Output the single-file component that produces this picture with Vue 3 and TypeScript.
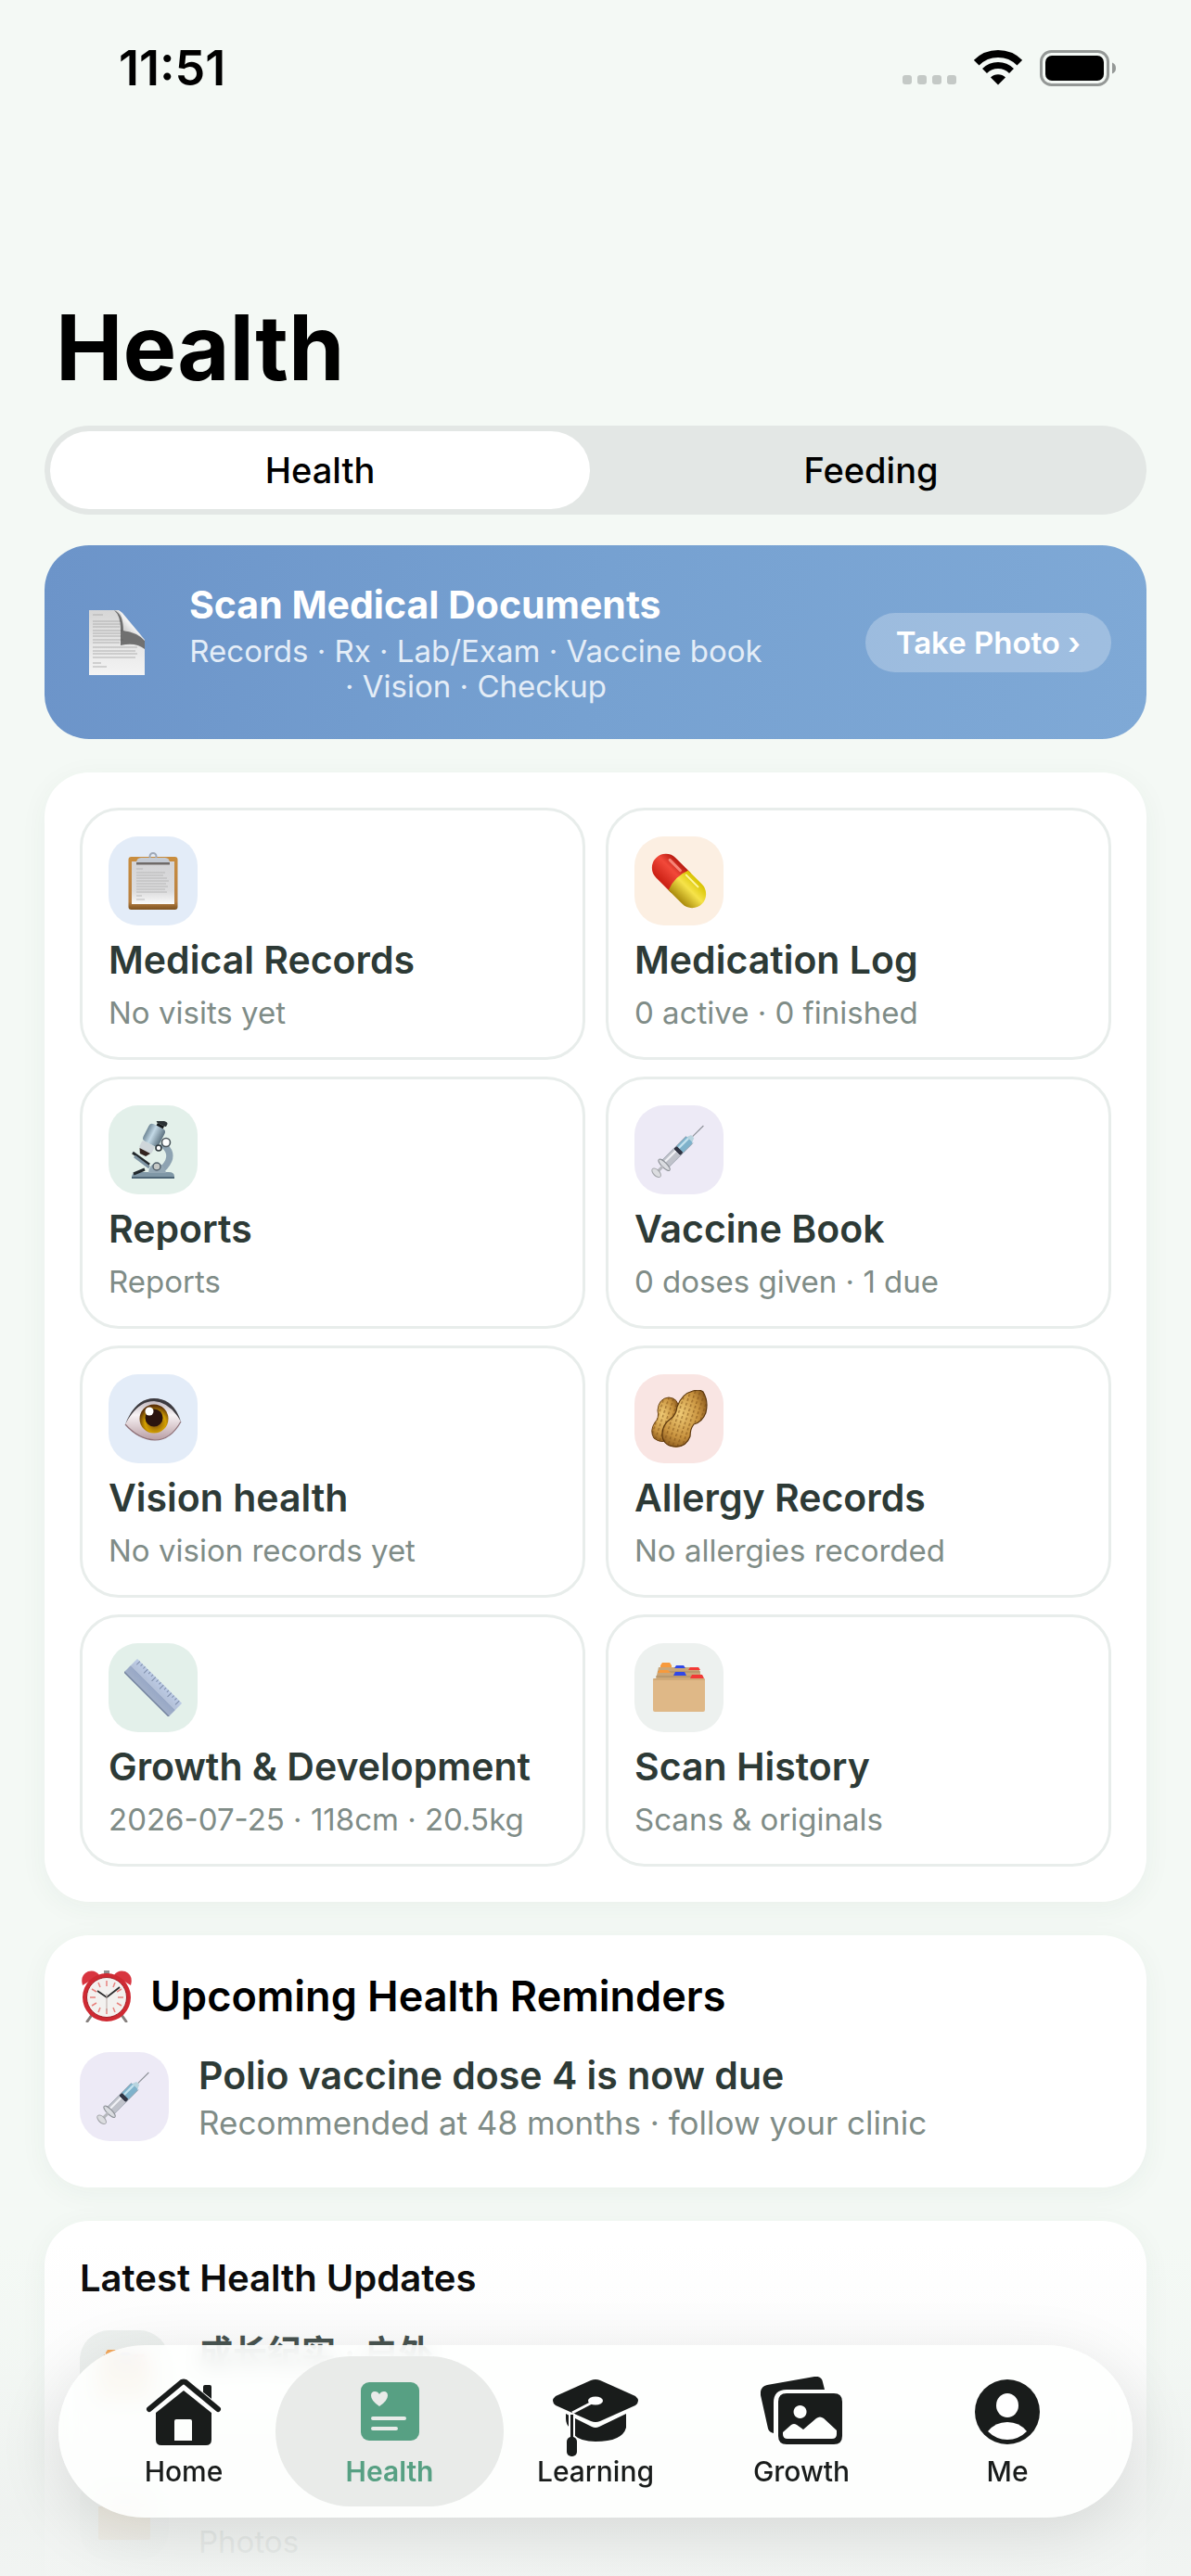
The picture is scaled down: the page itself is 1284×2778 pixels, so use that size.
<script setup lang="ts">
import { ref } from 'vue'

interface Tile {
  icon: string
  tint: string
  title: string
  sub: string
}

const segments = ['Health', 'Feeding']
const activeSegment = ref('Health')

const tiles: Tile[] = [
  { icon: 'clipboard', tint: 'blue', title: 'Medical Records', sub: 'No visits yet' },
  { icon: 'pill', tint: 'orange', title: 'Medication Log', sub: '0 active · 0 finished' },
  { icon: 'microscope', tint: 'green', title: 'Reports', sub: 'Reports' },
  { icon: 'syringe', tint: 'purple', title: 'Vaccine Book', sub: '0 doses given · 1 due' },
  { icon: 'eye', tint: 'blue', title: 'Vision health', sub: 'No vision records yet' },
  { icon: 'peanuts', tint: 'red', title: 'Allergy Records', sub: 'No allergies recorded' },
  { icon: 'ruler', tint: 'green', title: 'Growth & Development', sub: '2026-07-25 · 118cm · 20.5kg' },
  { icon: 'dividers', tint: 'gray', title: 'Scan History', sub: 'Scans & originals' },
]

const updates = [
  { title: '成长纪实 · 户外', sub: '' },
  { title: '', sub: 'Photos' },
]

const tabs = ['Home', 'Health', 'Learning', 'Growth', 'Me']
const activeTab = ref('Health')
</script>

<template>
  <!-- Shared artwork -->
  <svg class="defs" aria-hidden="true">
    <defs>
      <linearGradient id="g-paper" x1="0" y1="0" x2="0" y2="1">
        <stop offset="0" stop-color="#d6d6d6" /><stop offset="1" stop-color="#f4f4f4" />
      </linearGradient>
      <linearGradient id="g-curl" x1="0" y1="1" x2="1" y2="0">
        <stop offset="0" stop-color="#9a9a9a" /><stop offset="0.5" stop-color="#f2f2f2" /><stop offset="1" stop-color="#d8d8d8" />
      </linearGradient>
      <linearGradient id="g-wood" x1="0" y1="0" x2="0" y2="1">
        <stop offset="0" stop-color="#c98d3e" /><stop offset="0.85" stop-color="#b98143" /><stop offset="1" stop-color="#7c5220" />
      </linearGradient>
      <linearGradient id="g-sheet" x1="0" y1="0" x2="0" y2="1">
        <stop offset="0" stop-color="#d4d4d6" /><stop offset="0.7" stop-color="#dcdcdd" /><stop offset="1" stop-color="#fafafa" />
      </linearGradient>
      <linearGradient id="g-red" x1="0" y1="0" x2="0" y2="1">
        <stop offset="0" stop-color="#b81a10" /><stop offset="0.4" stop-color="#f2493a" /><stop offset="1" stop-color="#c91e12" />
      </linearGradient>
      <linearGradient id="g-yellow" x1="0" y1="0" x2="0" y2="1">
        <stop offset="0" stop-color="#d8c300" /><stop offset="0.45" stop-color="#f6e34a" /><stop offset="1" stop-color="#a98a0c" />
      </linearGradient>
      <linearGradient id="g-steel" x1="0" y1="0" x2="1" y2="0">
        <stop offset="0" stop-color="#6f8796" /><stop offset="0.4" stop-color="#c3d9e6" /><stop offset="1" stop-color="#5d7280" />
      </linearGradient>
      <linearGradient id="g-ruler" x1="0" y1="0" x2="0" y2="1">
        <stop offset="0" stop-color="#bccbe6" /><stop offset="0.5" stop-color="#b4c1d8" /><stop offset="0.52" stop-color="#98a8c6" /><stop offset="1" stop-color="#a2b0c9" />
      </linearGradient>
      <radialGradient id="g-iris" cx="0.55" cy="0.65" r="0.6">
        <stop offset="0" stop-color="#7a4a10" /><stop offset="0.6" stop-color="#d3a000" /><stop offset="1" stop-color="#5d3208" />
      </radialGradient>
      <linearGradient id="g-white" x1="0" y1="0" x2="0" y2="1">
        <stop offset="0" stop-color="#b9aeb6" /><stop offset="0.4" stop-color="#f8f3f5" /><stop offset="1" stop-color="#b89da3" />
      </linearGradient>
      <radialGradient id="g-nut" cx="0.4" cy="0.4" r="0.7">
        <stop offset="0" stop-color="#f0cb76" /><stop offset="0.6" stop-color="#c99440" /><stop offset="1" stop-color="#7a4a14" />
      </radialGradient>
      <pattern id="p-nut" width="5" height="5" patternUnits="userSpaceOnUse" patternTransform="rotate(18)">
        <rect x="1" y="1" width="1.400" height="3" fill="#7a4b14" opacity="0.6" />
      </pattern>
    </defs>

    <symbol id="i-document" viewBox="0 0 60 70">
      <path d="M0 0H32L60 32V70H0Z" fill="url(#g-paper)" />
      <path d="M4 5h11M4 12h30M4 15h30M4 18h29M4 22h32M4 25h30M4 28h31M4 32h33M4 35h29M4 40h48M4 44h46M4 47h48M4 51h46M4 57h9M4 61h15" stroke="#b0b0b0" stroke-width="1.200" fill="none" />
      <path d="M27 0Q37 4 37 22Q52 24 60 33V42Q50 34 34 38V20Q34 6 27 0Z" fill="#4a4a4a" opacity="0.75" />
      <path d="M30 0Q38 4 37 22Q52 22 60 32L36 3Q33 0 30 0Z" fill="url(#g-curl)" />
    </symbol>

    <symbol id="i-clipboard" viewBox="0 0 62 62">
      <rect x="4.500" y="5" width="53" height="57" rx="3" fill="url(#g-wood)" />
      <rect x="8" y="10" width="46" height="46" fill="url(#g-sheet)" />
      <path d="M13 18h7M13 22h31M13 25h29M13 28h33M13 31h35M13 34h32M13 37h34M13 40h31M13 43h33M13 47h6M13 51h9" stroke="#b8b8b8" stroke-width="1" fill="none" />
      <circle cx="31" cy="4.500" r="3.500" fill="none" stroke="#9fa9b8" stroke-width="2" />
      <path d="M13 12Q13 6 18 6H44Q49 6 49 12Z" fill="#c4cad3" />
      <rect x="13" y="11" width="36" height="2.500" fill="#6f6a68" />
    </symbol>

    <symbol id="i-pill" viewBox="0 0 62 62">
      <g transform="rotate(45 31 31)">
        <path d="M34 16H11a15 15 0 0 0 0 30H34Z" fill="url(#g-red)" />
        <path d="M30 16H51a15 15 0 0 1 0 30H30Q24 31 30 16Z" fill="url(#g-yellow)" />
        <path d="M8 22H24" stroke="#ff9a8c" stroke-width="3" stroke-linecap="round" opacity="0.8" />
        <path d="M32 21H50" stroke="#fff6a0" stroke-width="2" stroke-linecap="round" />
      </g>
    </symbol>

    <symbol id="i-microscope" viewBox="0 0 62 62">
      <path d="M40 24Q54 34 46 46Q42 53 34 53" fill="none" stroke="#8ea3b2" stroke-width="7" />
      <path d="M8 60Q9 55 14 55H48Q54 55 54 60Z" fill="#7f97a6" />
      <path d="M8 60H54V62H8Z" fill="#4d6576" />
      <path d="M26 56Q27 46 35 45Q43 46 45 56Z" fill="#94a8b5" />
      <circle cx="35" cy="49" r="4" fill="#c6c9c6" stroke="#52606b" stroke-width="1.500" />
      <path d="M9 34L27 47" stroke="#22282c" stroke-width="3" />
      <path d="M11 38L27 50" stroke="#7d93a2" stroke-width="3" />
      <path d="M10 57L22 52" stroke="#22282c" stroke-width="3" />
      <g transform="rotate(27 30 18)">
        <rect x="26" y="-4" width="12" height="5" rx="2" fill="#2a3134" />
        <rect x="28" y="1" width="8" height="4" fill="#15191b" />
        <rect x="21" y="4" width="19" height="21" rx="4" fill="url(#g-steel)" />
        <rect x="22" y="25" width="15" height="9" rx="2" fill="#cfd6da" />
        <path d="M23 34H36L33 39H26Z" fill="#33231f" />
      </g>
      <circle cx="45" cy="23" r="4.500" fill="#fff" stroke="#4b565c" stroke-width="1.600" />
      <circle cx="37" cy="29" r="3" fill="#fff" stroke="#2e373c" stroke-width="1.600" />
    </symbol>

    <symbol id="i-syringe" viewBox="0 0 62 62">
      <g transform="rotate(45 31 31) translate(8 5) scale(0.750 0.920)">
        <path d="M31 -12V6" stroke="#8c9097" stroke-width="1.500" />
        <path d="M28 6h6l3 6H25Z" fill="#b9d4df" />
        <rect x="24" y="11" width="14" height="17" rx="2" fill="#7fb2cb" />
        <rect x="27" y="11" width="3" height="17" fill="#c4e2ee" />
        <rect x="24" y="27" width="14" height="5" rx="2" fill="#303443" />
        <rect x="24" y="32" width="14" height="20" fill="#bfc2ca" />
        <rect x="27" y="32" width="3" height="20" fill="#f0f1f5" />
        <path d="M24 11V52M38 11V52" stroke="#9aa3ad" stroke-width="1" />
        <ellipse cx="31" cy="53" rx="11" ry="3" fill="#dadce0" stroke="#8d9197" stroke-width="1.200" />
        <rect x="29" y="55" width="4" height="9" fill="#b6b8bd" />
        <ellipse cx="31" cy="66" rx="8" ry="3.500" fill="#dcdde0" stroke="#a3a5aa" stroke-width="1.200" />
      </g>
    </symbol>

    <symbol id="i-eye" viewBox="0 0 62 62">
      <path d="M1 37Q12 10 32 9Q52 10 61 34Q50 54 33 54Q15 53 1 37Z" fill="url(#g-white)" />
      <path d="M1 37Q12 9 32 9Q53 9 61 34Q49 13 32 12Q14 12 1 37Z" fill="#3d3b40" />
      <circle cx="32" cy="31" r="15.500" fill="url(#g-iris)" />
      <circle cx="32" cy="30" r="9.500" fill="#2b140f" />
      <circle cx="27" cy="23" r="4.500" fill="#fff" />
      <path d="M1 37Q15 53 33 54Q50 54 61 34" fill="none" stroke="#8f7279" stroke-width="1.200" />
    </symbol>

    <symbol id="i-peanuts" viewBox="0 0 62 62">
      <path d="M20 8Q31 9 30 20Q28 27 24 34Q24 42 18 54Q12 58 4 52Q-1 44 5 35Q10 30 8 22Q9 9 20 8Z" fill="url(#g-nut)" />
      <path d="M20 8Q31 9 30 20Q28 27 24 34Q24 42 18 54Q12 58 4 52Q-1 44 5 35Q10 30 8 22Q9 9 20 8Z" fill="url(#p-nut)" stroke="#6b4212" stroke-width="1" />
      <path d="M46 1Q54 -1 57 2Q63 12 60 24Q57 34 47 37Q43 42 43 50Q39 61 28 62Q15 61 13 50Q12 38 22 31Q28 27 29 18Q34 4 46 1Z" fill="url(#g-nut)" />
      <path d="M46 1Q54 -1 57 2Q63 12 60 24Q57 34 47 37Q43 42 43 50Q39 61 28 61Q15 61 13 50Q12 38 22 31Q28 27 29 18Q34 4 46 1Z" fill="url(#p-nut)" stroke="#5c370d" stroke-width="1.200" />
    </symbol>

    <symbol id="i-ruler" viewBox="0 0 62 62">
      <g transform="rotate(45 31 31)">
        <rect x="-3" y="21" width="68" height="20" fill="url(#g-ruler)" />
        <path d="M1 21v5M5 21v3M9 21v3M13 21v6M17 21v3M21 21v3M25 21v6M29 21v3M33 21v3M37 21v6M41 21v3M45 21v3M49 21v6M53 21v3M57 21v3M61 21v6" stroke="#7f8ea9" stroke-width="1" />
        <path d="M-3 41H65" stroke="#75849f" stroke-width="1.500" />
      </g>
    </symbol>

    <symbol id="i-dividers" viewBox="0 0 62 62">
      <path d="M9 9H52L56 22H6Z" fill="#c9a678" />
      <path d="M11 7l2-3h8l2 3v2H11Z" fill="#f79a3c" />
      <path d="M26 10l2-3h8l2 3Z" fill="#3048e8" />
      <path d="M41 12l2-3h9l2 3Z" fill="#f23a36" />
      <path d="M8 14H54M6 19H57" stroke="#a98a60" stroke-width="1.200" />
      <path d="M8 15l2-3h9l3 3Z" fill="#f79a3c" />
      <path d="M25 18l2-4h10l2 4Z" fill="#3048e8" />
      <path d="M43 21l2-4h11l2 4Z" fill="#f23a36" />
      <rect x="3" y="21" width="56" height="36" rx="2" fill="#dfb887" />
      <path d="M3 22H59" stroke="#c49c68" stroke-width="1.200" />
    </symbol>

    <symbol id="i-alarm" viewBox="0 0 56 56">
      <path d="M12 48L7 55M44 48L49 55" stroke="#85807e" stroke-width="3" stroke-linecap="round" />
      <rect x="25" y="0" width="6" height="5" fill="#8f8f8f" />
      <path d="M2 16Q-1 5 8 1Q16 -1 20 5Z" fill="#d83540" />
      <path d="M54 16Q57 5 48 1Q40 -1 36 5Z" fill="#d83540" />
      <circle cx="28" cy="29" r="26" fill="#cf2a33" />
      <circle cx="28" cy="29" r="21.500" fill="#f3f1ef" stroke="#a51f27" stroke-width="1" />
      <path d="M28 11v6M28 41v6M10 29h6M40 29h6M19 13l2 5M37 13l-2 5M19 45l2-5M37 45l-2-5M12 20l5 3M44 20l-5 3M12 38l5-3M44 38l-5-3" stroke="#e8837f" stroke-width="1.500" />
      <path d="M18 22L28 29L42 18" fill="none" stroke="#2c2c2c" stroke-width="1.800" />
      <path d="M28 25V44" stroke="#b9aaa7" stroke-width="1" />
    </symbol>

    <symbol id="t-home" viewBox="0 0 82 72">
      <path d="M62 26V9q0-2 2-2h5q2 0 2 2V31Z" />
      <path d="M3 34L41 4L79 34" fill="none" stroke="#fff" stroke-width="9" />
      <path d="M4 33L39 4Q41 3 43 4L78 33" fill="none" stroke="currentColor" stroke-width="6" stroke-linecap="round" />
      <path d="M41 13L71 37V66q0 6-6 6H17q-6 0-6-6V37ZM33 44q-2 0-2 2V67H50V46q0-2-2-2Z" fill-rule="evenodd" />
    </symbol>
    <symbol id="t-health" viewBox="0 0 63 63">
      <rect width="63" height="63" rx="9" />
      <path d="M20 26Q11 20 11 14.500Q11 10 15 10Q18.500 10 20 13Q21.500 10 25 10Q29 10 29 14.500Q29 20 20 26Z" fill="#e9ebe9" />
      <path d="M13 39H47M13 50H38" stroke="#e9ebe9" stroke-width="4" stroke-linecap="round" />
    </symbol>
    <symbol id="t-learning" viewBox="0 0 92 83">
      <path d="M14 37L42 51Q46 53 50 51L79 37V52Q75 67 46 67Q30 67 23 60V41L18 39V52Q14 48 14 42Z" />
      <path d="M41 1Q46 -1 51 1L89 18Q95 23 89 28L51 45Q46 47 41 45L3 28Q-3 23 3 18Z" />
      <ellipse cx="46" cy="23" rx="8" ry="4.500" fill="#fff" />
      <path d="M44 24L21 36" stroke="#fff" stroke-width="3" />
      <path d="M20.500 37V66" stroke="#fff" stroke-width="7" />
      <path d="M20.500 38V66" stroke="currentColor" stroke-width="3" />
      <rect x="15" y="62" width="11" height="21" rx="5" />
    </symbol>
    <symbol id="t-growth" viewBox="0 0 88 73">
      <path d="M7 9L58 0q8-1 9 6l2 8H28q-14 0-14 14V61q-5-1-6-5L0 20q-1-9 7-11Z" />
      <path d="M28 18H79q9 0 9 9V64q0 9-9 9H28q-9 0-9-9V27q0-9 9-9ZM42.500 31a7 7 0 1 0 .1 0ZM24 60V62q0 5 5 5H77q5 0 5-5V58L68 45Q64 42 60 45L46 57L39 52Q36 50 33 52Z" fill-rule="evenodd" />
    </symbol>
    <symbol id="t-me" viewBox="0 0 70 70">
      <circle cx="35" cy="35" r="35" />
      <ellipse cx="35" cy="28" rx="12" ry="13" fill="#fff" />
      <path d="M14 56Q22 46 35 46T56 56Q47 65 35 65T14 56Z" fill="#fff" />
    </symbol>
  </svg>

  <div class="screen">
    <header class="status">
      <time class="clock">11:51</time>
      <div class="indicators">
        <span class="dots"><i v-for="n in 4" :key="n"></i></span>
        <svg class="wifi" viewBox="0 0 52 38" aria-label="Wi-Fi">
          <path d="M2.700 13.700A33 33 0 0 1 49.300 13.700" fill="none" stroke="#000" stroke-width="8" />
          <path d="M11.500 22.500A20.500 20.500 0 0 1 40.500 22.500" fill="none" stroke="#000" stroke-width="7" />
          <path d="M26 37.500L18 29.500A11.500 11.500 0 0 1 34 29.500Z" />
        </svg>
        <svg class="battery" viewBox="0 0 83 39" aria-label="Battery">
          <rect x="1.500" y="1.500" width="72" height="36" rx="11" fill="none" stroke="#949896" stroke-width="3" />
          <rect x="6" y="6" width="63" height="27" rx="7" />
          <path d="M78 13.500Q82 15 82 19.500T78 25.500Z" fill="#949896" />
        </svg>
      </div>
    </header>

    <main class="content">
      <h1>Health</h1>

      <div class="segmented" role="tablist">
        <button
          v-for="s in segments"
          :key="s"
          type="button"
          role="tab"
          :aria-selected="activeSegment === s"
          :class="{ on: activeSegment === s }"
          @click="activeSegment = s"
        >{{ s }}</button>
      </div>

      <section class="banner">
        <svg class="doc"><use href="#i-document" /></svg>
        <div class="banner-text">
          <h2>Scan Medical Documents</h2>
          <p>Records · Rx · Lab/Exam · Vaccine book<br />· Vision · Checkup</p>
        </div>
        <button type="button" class="photo">Take Photo ›</button>
      </section>

      <section class="card grid">
        <button v-for="t in tiles" :key="t.title" type="button" class="tile">
          <span class="badge" :class="t.tint"><svg><use :href="'#i-' + t.icon" /></svg></span>
          <span class="title">{{ t.title }}</span>
          <span class="sub">{{ t.sub }}</span>
        </button>
      </section>

      <section class="card">
        <h2 class="heading"><svg><use href="#i-alarm" /></svg>Upcoming Health Reminders</h2>
        <div class="row">
          <span class="badge purple"><svg><use href="#i-syringe" /></svg></span>
          <div class="row-text">
            <span class="title">Polio vaccine dose 4 is now due</span>
            <span class="sub">Recommended at 48 months · follow your clinic</span>
          </div>
        </div>
      </section>

      <section class="card">
        <h2 class="heading small">Latest Health Updates</h2>
        <div v-for="(u, i) in updates" :key="i" class="row update">
          <span class="badge gray"><svg><use href="#i-dividers" /></svg></span>
          <div class="row-text">
            <span class="title">{{ u.title }}</span>
            <span class="sub">{{ u.sub }}</span>
          </div>
        </div>
      </section>
    </main>

    <div class="fade"></div>

    <nav class="tabbar">
      <a
        v-for="t in tabs"
        :key="t"
        href="#"
        :class="{ on: activeTab === t }"
        @click.prevent="activeTab = t"
      >
        <svg :class="t.toLowerCase()"><use :href="'#t-' + t.toLowerCase()" /></svg>
        <span>{{ t }}</span>
      </a>
    </nav>
  </div>
</template>

<style>
body {
  background: #f4f9f5;
}
</style>

<style scoped>
.defs {
  position: absolute;
  width: 0;
  height: 0;
}
.screen {
  position: relative;
  height: 100vh;
  overflow: hidden;
  background: #f4f9f5;
  font-family: Inter, "Noto Sans CJK SC", sans-serif;
  color: #000;
}
h1, h2, p {
  margin: 0;
}
button {
  font: inherit;
  color: inherit;
  border: 0;
  background: none;
  padding: 0;
}
svg {
  display: block;
  flex: none;
}

.status {
  display: flex;
  justify-content: space-between;
  align-items: center;
  height: 146px;
  padding: 0 80px 0 128px;
}
.clock {
  font-size: 52px;
  font-weight: 600;
}
.indicators {
  display: flex;
  align-items: center;
  gap: 19px;
}
.dots {
  display: flex;
  align-self: flex-end;
  gap: 6px;
  padding-bottom: 2px;
}
.dots i {
  width: 10px;
  height: 10px;
  border-radius: 3px;
  background: #c4c9c6;
}
.wifi {
  width: 52px;
  height: 38px;
}
.battery {
  width: 83px;
  height: 39px;
}

.content {
  display: flex;
  flex-direction: column;
  padding: 0 48px;
}
h1 {
  margin: 169px 0 24px;
  padding: 0 12px;
  font-size: 97px;
  line-height: 120px;
  font-weight: 700;
}

.segmented {
  display: flex;
  gap: 12px;
  padding: 6px;
  border-radius: 48px;
  background: #e3e7e5;
}
.segmented button {
  flex: 1;
  height: 84px;
  border-radius: 42px;
  font-size: 38px;
  font-weight: 500;
}
.segmented .on {
  background: #fff;
}

.banner {
  display: flex;
  align-items: center;
  margin-top: 33px;
  padding: 38px;
  border-radius: 48px;
  background: linear-gradient(100deg, #6c94c9, #76a1d1 50%, #7fa9d6);
  color: #fff;
}
.doc {
  width: 60px;
  height: 70px;
  margin: 0 48px 0 10px;
}
.banner-text {
  flex: 1;
}
.banner-text h2 {
  margin-bottom: 5px;
  font-size: 41px;
  line-height: 52px;
  font-weight: 700;
}
.banner-text p {
  width: 618px;
  font-size: 33px;
  line-height: 38px;
  text-align: center;
  white-space: nowrap;
  color: #e4edf7;
}
.photo {
  height: 64px;
  padding: 0 33px;
  border-radius: 32px;
  background: rgba(255, 255, 255, 0.26);
  font-size: 33px;
  font-weight: 600;
}

.card {
  margin-top: 36px;
  padding: 38px;
  border-radius: 48px;
  background: #fff;
  box-shadow: 0 6px 30px rgba(40, 80, 60, 0.05);
}
.grid {
  display: grid;
  grid-template-columns: 1fr 1fr;
  gap: 18px 22px;
}
.tile {
  display: flex;
  flex-direction: column;
  align-items: flex-start;
  padding: 28px;
  border: 3px solid #e8edeb;
  border-radius: 42px;
  text-align: left;
}
.badge {
  display: flex;
  align-items: center;
  justify-content: center;
  flex: none;
  width: 96px;
  height: 96px;
  border-radius: 32px;
}
.badge svg {
  width: 62px;
  height: 62px;
}
.blue { background: #e3ecf8; }
.orange { background: #fcefe2; }
.green { background: #e3f0ea; }
.purple { background: #edeaf6; }
.red { background: #f9e5e3; }
.gray { background: #edf1ef; }
.title {
  min-height: 50px;
  font-size: 41px;
  line-height: 50px;
  font-weight: 600;
  color: #2d3a36;
}
.sub {
  min-height: 40px;
  font-size: 33px;
  line-height: 40px;
  color: #7f8c87;
}
.tile .title {
  margin-top: 12px;
}
.tile .sub {
  margin-top: 12px;
}

.heading {
  display: flex;
  align-items: center;
  gap: 18px;
  font-size: 45px;
  line-height: 56px;
  font-weight: 600;
}
.heading svg {
  width: 58px;
  height: 56px;
}
.heading.small {
  font-size: 40px;
  line-height: 48px;
}
.row {
  display: flex;
  align-items: center;
  gap: 32px;
  margin-top: 20px;
  padding: 12px 0;
}
.update + .update {
  margin-top: 32px;
}
.row-text {
  display: flex;
  flex-direction: column;
  gap: 6px;
}
.row-text .sub {
  font-size: 35px;
}
.update .title {
  font-size: 37px;
}
.update .sub {
  font-size: 33px;
}

.fade {
  position: absolute;
  right: 0;
  bottom: 0;
  left: 0;
  height: 360px;
  background: linear-gradient(rgba(240, 243, 241, 0), rgba(236, 238, 237, 0.14) 30%, rgba(238, 241, 239, 0.86) 80%, rgba(241, 244, 242, 0.95));
}
.tabbar {
  position: absolute;
  right: 63px;
  bottom: 63px;
  left: 63px;
  display: flex;
  padding: 12px 24px;
  border-radius: 93px;
  background: rgba(254, 255, 254, 0.88);
  backdrop-filter: blur(10px);
  box-shadow: 0 16px 70px rgba(0, 0, 0, 0.11);
}
.tabbar a {
  display: flex;
  flex: 1;
  flex-direction: column;
  align-items: center;
  justify-content: flex-end;
  height: 162px;
  margin: 0 -12px;
  padding: 0 12px 20px;
  box-sizing: border-box;
  border-radius: 81px;
  color: #191c1b;
  fill: currentColor;
  font-size: 30px;
  line-height: 36px;
  font-weight: 500;
  text-decoration: none;
}
.tabbar a.on {
  background: #e9ebe9;
  color: #57a083;
  font-weight: 600;
}
.tabbar span {
  margin-top: 10px;
}
.home { width: 82px; height: 72px; }
.health { width: 63px; height: 63px; margin-bottom: 5px; }
.learning { width: 92px; height: 83px; margin-bottom: -12px; }
.growth { width: 88px; height: 73px; margin-bottom: 1px; }
.me { width: 70px; height: 70px; margin-bottom: 1px; }
</style>
